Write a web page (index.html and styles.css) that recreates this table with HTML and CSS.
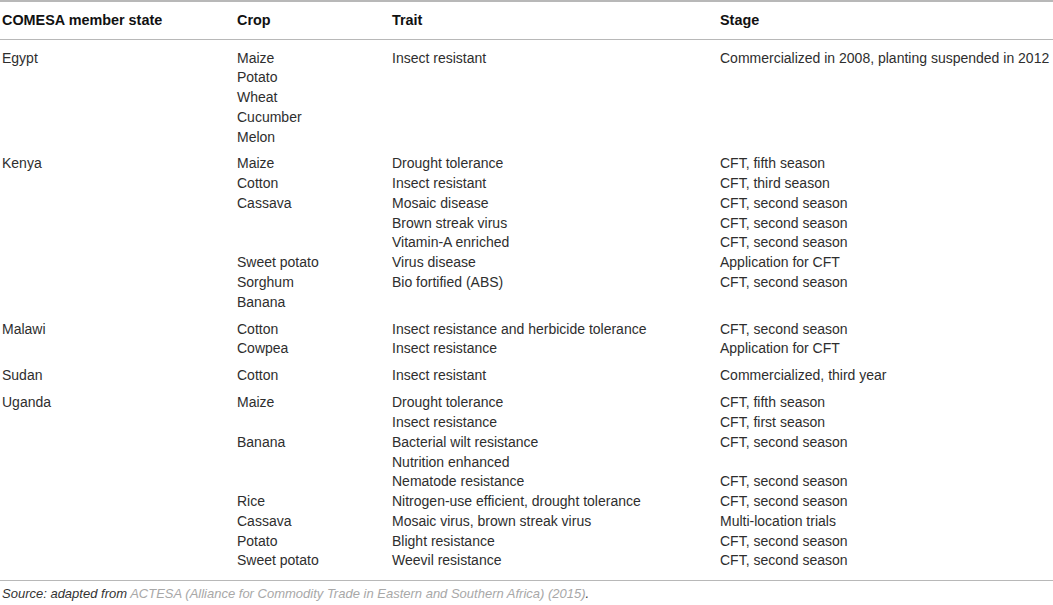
FILE: index.html
```html
<!DOCTYPE html>
<html lang="en">
<head>
    <meta charset="UTF-8">
    <title>GM crops in COMESA member states</title>
    <link rel="stylesheet" href="styles.css">
</head>
<body>
    <table class="crops">
        <colgroup>
            <col class="c-state">
            <col class="c-crop">
            <col class="c-trait">
            <col class="c-stage">
        </colgroup>
        <thead>
            <tr>
                <th>COMESA member state</th>
                <th>Crop</th>
                <th>Trait</th>
                <th>Stage</th>
            </tr>
        </thead>
        <!-- Egypt -->
        <tbody class="group first-group">
            <tr><td>Egypt</td><td>Maize</td><td>Insect resistant</td><td>Commercialized in 2008, planting suspended in 2012</td></tr>
            <tr><td></td><td>Potato</td><td></td><td></td></tr>
            <tr><td></td><td>Wheat</td><td></td><td></td></tr>
            <tr><td></td><td>Cucumber</td><td></td><td></td></tr>
            <tr><td></td><td>Melon</td><td></td><td></td></tr>
        </tbody>
        <!-- Kenya -->
        <tbody class="group">
            <tr><td>Kenya</td><td>Maize</td><td>Drought tolerance</td><td>CFT, fifth season</td></tr>
            <tr><td></td><td>Cotton</td><td>Insect resistant</td><td>CFT, third season</td></tr>
            <tr><td></td><td>Cassava</td><td>Mosaic disease</td><td>CFT, second season</td></tr>
            <tr><td></td><td></td><td>Brown streak virus</td><td>CFT, second season</td></tr>
            <tr><td></td><td></td><td>Vitamin-A enriched</td><td>CFT, second season</td></tr>
            <tr><td></td><td>Sweet potato</td><td>Virus disease</td><td>Application for CFT</td></tr>
            <tr><td></td><td>Sorghum</td><td>Bio fortified (ABS)</td><td>CFT, second season</td></tr>
            <tr><td></td><td>Banana</td><td></td><td></td></tr>
        </tbody>
        <!-- Malawi -->
        <tbody class="group">
            <tr><td>Malawi</td><td>Cotton</td><td>Insect resistance and herbicide tolerance</td><td>CFT, second season</td></tr>
            <tr><td></td><td>Cowpea</td><td>Insect resistance</td><td>Application for CFT</td></tr>
        </tbody>
        <!-- Sudan -->
        <tbody class="group">
            <tr><td>Sudan</td><td>Cotton</td><td>Insect resistant</td><td>Commercialized, third year</td></tr>
        </tbody>
        <!-- Uganda -->
        <tbody class="group last-group">
            <tr><td>Uganda</td><td>Maize</td><td>Drought tolerance</td><td>CFT, fifth season</td></tr>
            <tr><td></td><td></td><td>Insect resistance</td><td>CFT, first season</td></tr>
            <tr><td></td><td>Banana</td><td>Bacterial wilt resistance</td><td>CFT, second season</td></tr>
            <tr><td></td><td></td><td>Nutrition enhanced</td><td></td></tr>
            <tr><td></td><td></td><td>Nematode resistance</td><td>CFT, second season</td></tr>
            <tr><td></td><td>Rice</td><td>Nitrogen-use efficient, drought tolerance</td><td>CFT, second season</td></tr>
            <tr><td></td><td>Cassava</td><td>Mosaic virus, brown streak virus</td><td>Multi-location trials</td></tr>
            <tr><td></td><td>Potato</td><td>Blight resistance</td><td>CFT, second season</td></tr>
            <tr><td></td><td>Sweet potato</td><td>Weevil resistance</td><td>CFT, second season</td></tr>
        </tbody>
    </table>
    <p class="source">Source: adapted from <a href="#">ACTESA (Alliance for Commodity Trade in Eastern and Southern Africa) (2015)</a>.</p>
</body>
</html>
```

FILE: styles.css
```css
body {
    margin: 0;
    background-color: #fff;
    font-family: "Liberation Sans", Arial, sans-serif;
    font-size: 14px;
    color: #2e2e2e;
}

.crops {
    width: 1053px;
    border-collapse: collapse;
    table-layout: fixed;
    border-top: 2px solid #b8b8b8;
    border-bottom: 1px solid #b8b8b8;
}

.c-state { width: 237px; }
.c-crop { width: 155px; }
.c-trait { width: 328px; }
.c-stage { width: 333px; }

th {
    text-align: left;
    font-weight: bold;
    font-size: 14.4px;
    color: #111;
    padding: 9px 0 10px 2px;
    line-height: 18px;
    border-bottom: 1px solid #b8b8b8;
}

td {
    padding: 0 0 0 2px;
    line-height: 19.75px;
    height: 19.75px;
    white-space: nowrap;
    vertical-align: top;
}

th + th,
td + td {
    padding-left: 0;
}

.group tr:first-child td {
    padding-top: 3.6px;
}

.group tr:last-child td {
    padding-bottom: 3.6px;
}

.first-group tr:first-child td {
    padding-top: 8.5px;
}

.last-group tr:last-child td {
    padding-bottom: 9px;
}

.source {
    margin: 5px 0 0 2px;
    font-style: italic;
    font-size: 13px;
    color: #333;
}

.source a {
    color: #a8a8a8;
    text-decoration: none;
}
```
